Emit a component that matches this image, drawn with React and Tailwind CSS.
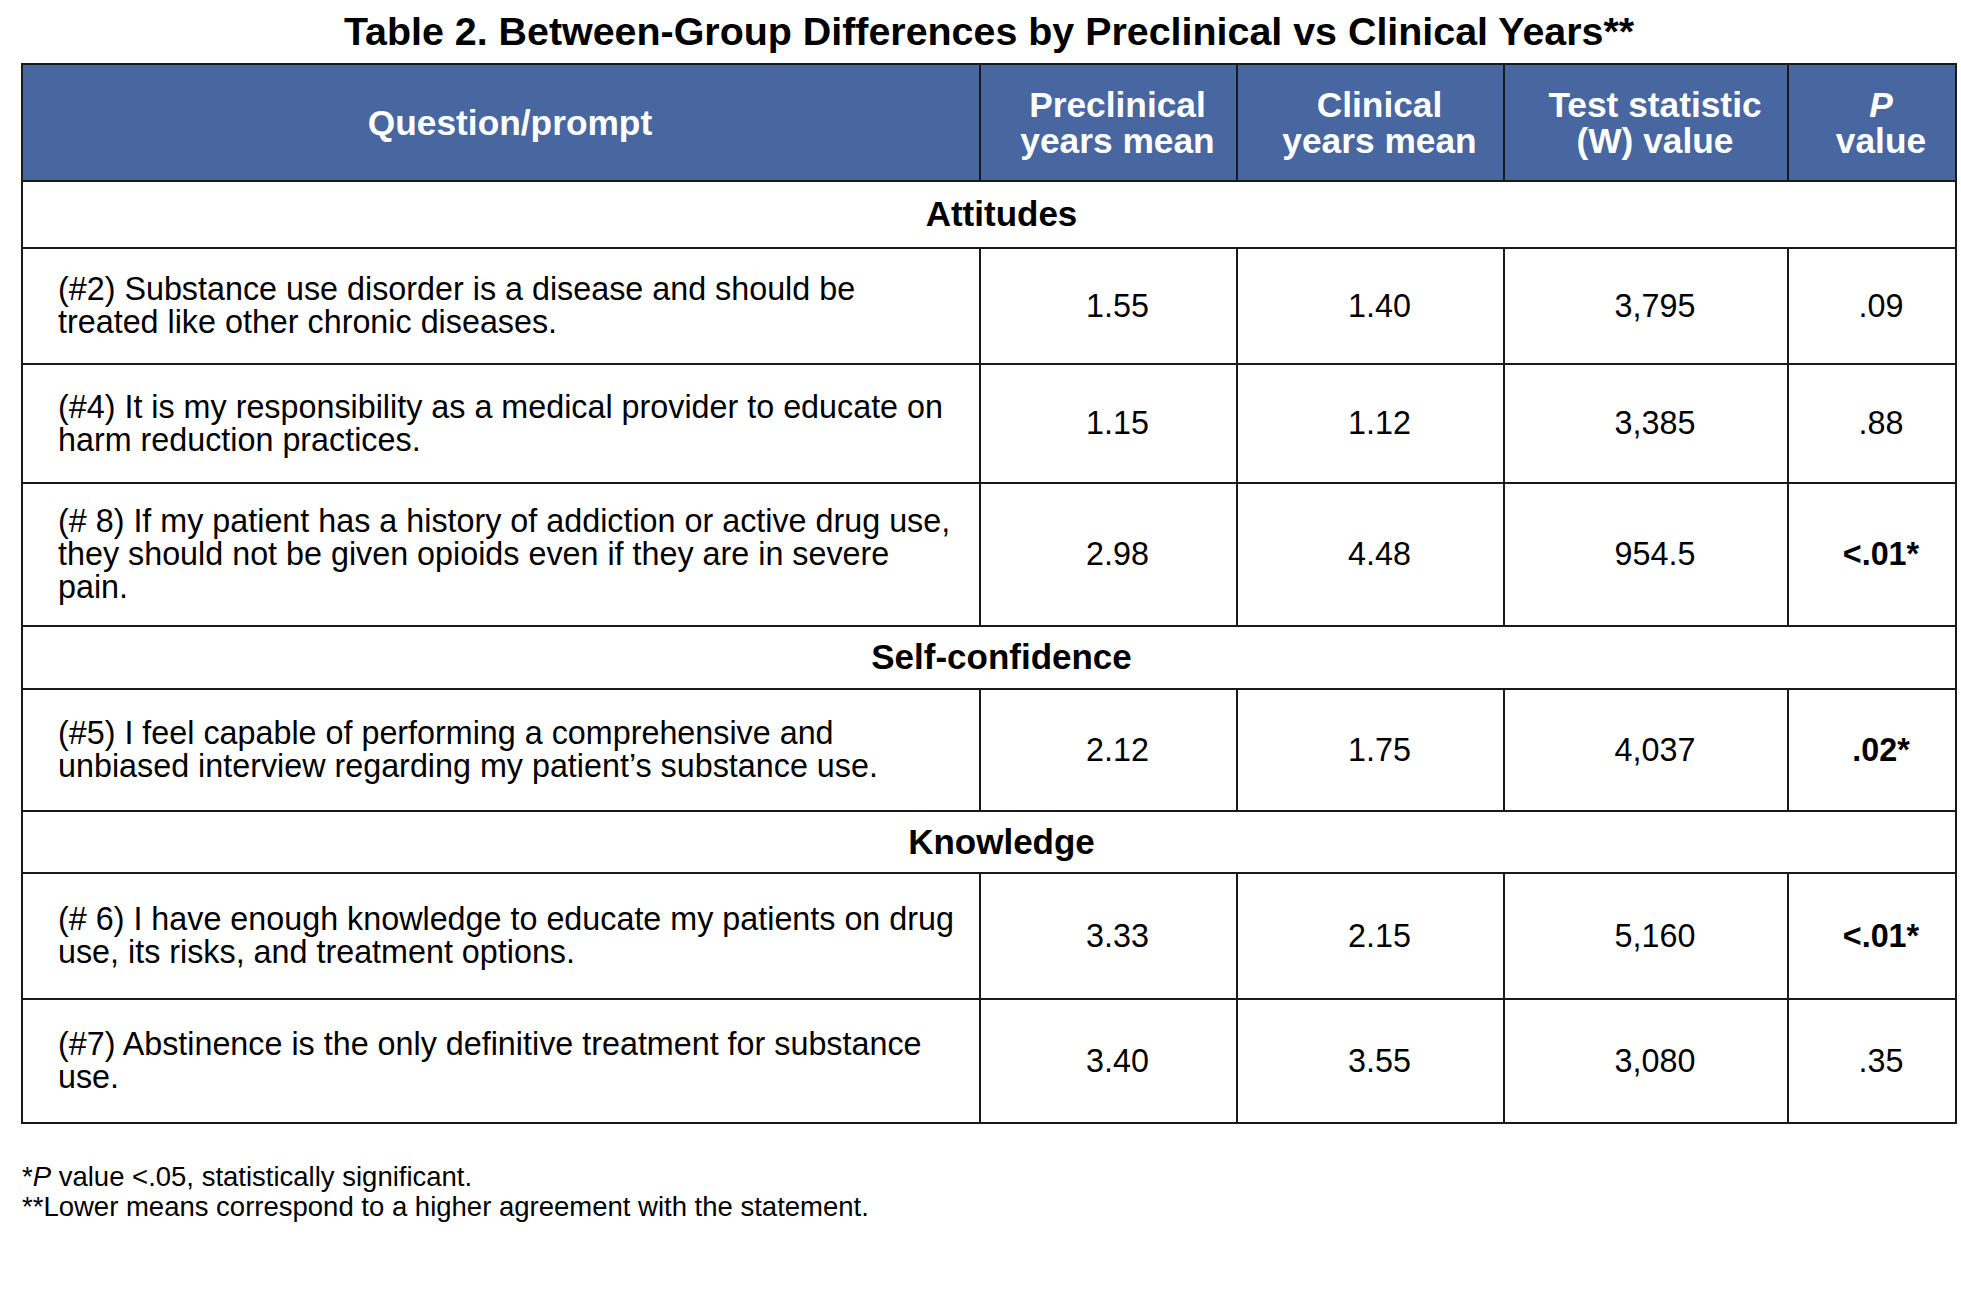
const rows = [
  { type: 'section', label: 'Attitudes', h: 'h-[67px]' },
  {
    h: 'h-[116px]',
    lines: ['(#2) Substance use disorder is a disease and should be', 'treated like other chronic diseases.'],
    pre: '1.55', clin: '1.40', w: '3,795', p: '.09',
  },
  {
    h: 'h-[119px]',
    lines: ['(#4) It is my responsibility as a medical provider to educate on', 'harm reduction practices.'],
    pre: '1.15', clin: '1.12', w: '3,385', p: '.88',
  },
  {
    h: 'h-[143px]',
    lines: [
      '(# 8) If my patient has a history of addiction or active drug use,',
      'they should not be given opioids even if they are in severe',
      'pain.',
    ],
    pre: '2.98', clin: '4.48', w: '954.5', p: '<.01*', sig: true,
  },
  { type: 'section', label: 'Self-confidence', h: 'h-[63px]' },
  {
    h: 'h-[122px]',
    lines: ['(#5) I feel capable of performing a comprehensive and', 'unbiased interview regarding my patient’s substance use.'],
    pre: '2.12', clin: '1.75', w: '4,037', p: '.02*', sig: true,
  },
  { type: 'section', label: 'Knowledge', h: 'h-[62px]' },
  {
    h: 'h-[126px]',
    lines: ['(# 6) I have enough knowledge to educate my patients on drug', 'use, its risks, and treatment options.'],
    pre: '3.33', clin: '2.15', w: '5,160', p: '<.01*', sig: true,
  },
  {
    h: 'h-[122px]',
    lines: ['(#7) Abstinence is the only definitive treatment for substance', 'use.'],
    pre: '3.40', clin: '3.55', w: '3,080', p: '.35',
    last: true,
  },
]

const GRID = 'grid grid-cols-[958px_257px_267px_284px_166px]'

function HeaderCell({ children, last }) {
  return (
    <div
      className={
        'flex flex-col items-center justify-center pl-[18px] text-center ' +
        (last ? '' : 'border-r-2 border-[#1a1a1a]')
      }
    >
      {children}
    </div>
  )
}

function NumCell({ children, bold, last }) {
  return (
    <div
      className={
        'flex items-center justify-center pl-[18px] ' +
        (bold ? 'font-bold ' : '') +
        (last ? '' : 'border-r-2 border-[#1a1a1a]')
      }
    >
      {children}
    </div>
  )
}

export default function App() {
  return (
    <div className="min-h-[1292px] w-[1961px] bg-white font-['Liberation_Sans',Arial,sans-serif] text-black">
      <h1 className="ml-[21px] w-[1936px] pt-[12px] text-center text-[39.4px] font-bold leading-[39px]">
        Table 2. Between-Group Differences by Preclinical vs Clinical Years**
      </h1>

      <div className="ml-[21px] mt-[12px] w-[1936px] border-2 border-[#1a1a1a]">
        {/* header */}
        <div className={GRID + ' h-[117px] border-b-2 border-[#1a1a1a] bg-[#4866a0] text-[35.3px] font-bold leading-[36px] text-white'}>
          <HeaderCell>Question/prompt</HeaderCell>
          <HeaderCell>
            <span>Preclinical</span>
            <span>years mean</span>
          </HeaderCell>
          <HeaderCell>
            <span>Clinical</span>
            <span>years mean</span>
          </HeaderCell>
          <HeaderCell>
            <span>Test statistic</span>
            <span>(W) value</span>
          </HeaderCell>
          <HeaderCell last>
            <span className="italic">P</span>
            <span>value</span>
          </HeaderCell>
        </div>

        {rows.map((r, i) =>
          r.type === 'section' ? (
            <div
              key={i}
              className={'flex items-center justify-center border-b-2 border-[#1a1a1a] pl-[25px] text-[35px] font-bold ' + r.h}
            >
              {r.label}
            </div>
          ) : (
            <div
              key={i}
              className={
                GRID + ' text-[32.3px] leading-[33px] ' + r.h + (r.last ? '' : ' border-b-2 border-[#1a1a1a]')
              }
            >
              <div className="flex flex-col justify-center border-r-2 border-[#1a1a1a] pl-[35px]">
                {r.lines.map((l) => (
                  <span key={l} className="whitespace-nowrap">
                    {l}
                  </span>
                ))}
              </div>
              <NumCell>{r.pre}</NumCell>
              <NumCell>{r.clin}</NumCell>
              <NumCell>{r.w}</NumCell>
              <NumCell bold={r.sig} last>
                {r.p}
              </NumCell>
            </div>
          )
        )}
      </div>

      <div className="ml-[22px] mt-[38px] text-[27.5px] leading-[30px]">
        <p>
          *<span className="italic">P</span> value &lt;.05, statistically significant.
        </p>
        <p>**Lower means correspond to a higher agreement with the statement.</p>
      </div>
    </div>
  )
}
